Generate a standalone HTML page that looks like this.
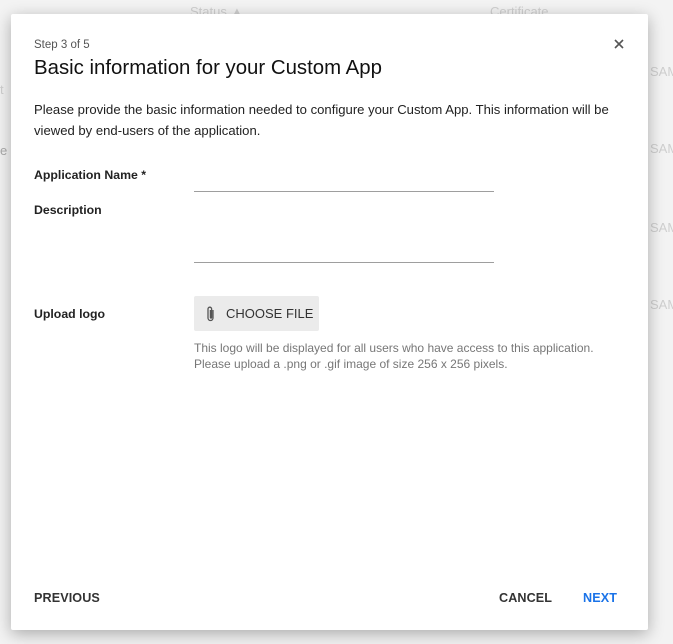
<!DOCTYPE html>
<html><head><style>
body{margin:0;width:673px;height:644px;background:#f3f3f3;font-family:"Liberation Sans",sans-serif;position:relative;overflow:hidden}
.bg{position:absolute;color:#cfcfcf;font-size:13px}
.dlg{position:absolute;left:11px;top:14px;width:637px;height:616px;background:#fff;box-shadow:0 4px 16px rgba(0,0,0,.3);border-radius:2px}
.a{position:absolute;white-space:nowrap}
.lbl{font-size:12.3px;font-weight:bold;color:#222;left:23px}
.line{position:absolute;left:183px;width:300px;height:1px;background:#9e9e9e}
.btn{font-size:12.6px;font-weight:bold;color:#333;letter-spacing:.1px}
</style></head><body>
<div class="bg" style="left:190px;top:4px">Status ▲</div>
<div class="bg" style="left:490px;top:4px">Certificate</div>
<div class="bg" style="left:650px;top:64px">SAM</div>
<div class="bg" style="left:650px;top:141px">SAM</div>
<div class="bg" style="left:650px;top:220px">SAM</div>
<div class="bg" style="left:650px;top:297px">SAM</div>
<div class="bg" style="left:0;top:82px">t</div>
<div class="bg" style="left:0;top:143px;color:#aaa">e</div>
<div class="dlg">
<div class="a" style="left:23px;top:25px;font-size:11.5px;color:#555">Step 3 of 5</div>
<svg class="a" style="left:603px;top:25px" width="10" height="10" viewBox="0 0 10 10"><path d="M1 1L9 9M9 1L1 9" stroke="#555" stroke-width="1.6"/></svg>
<div class="a" style="left:23px;top:43px;font-size:20.4px;color:#111">Basic information for your Custom App</div>
<div class="a" style="left:23px;top:85px;font-size:13.1px;color:#222;line-height:21px">Please provide the basic information needed to configure your Custom App. This information will be<br>viewed by end-users of the application.</div>
<div class="a lbl" style="top:154px">Application Name *</div>
<div class="line" style="top:177px"></div>
<div class="a lbl" style="top:189px">Description</div>
<div class="line" style="top:248px"></div>
<div class="a lbl" style="top:293px">Upload logo</div>
<div class="a" style="left:183px;top:282px;width:125px;height:35px;background:#ebebeb;border-radius:2px"></div>
<svg class="a" style="left:193px;top:291px" width="14" height="18" viewBox="0 0 14 18"><path d="M9 5v8a2.5 2.5 0 0 1-5 0V4a1.8 1.8 0 0 1 3.6 0v8.5a.6.6 0 0 1-1.2 0V5" fill="none" stroke="#555" stroke-width="1.3"/></svg>
<div class="a" style="left:215px;top:292px;font-size:13px;color:#333">CHOOSE FILE</div>
<div class="a" style="left:183px;top:326px;font-size:12px;color:#777;line-height:16px">This logo will be displayed for all users who have access to this application.<br>Please upload a .png or .gif image of size 256 x 256 pixels.</div>
<div class="a btn" style="left:23px;top:577px">PREVIOUS</div>
<div class="a btn" style="left:488px;top:577px">CANCEL</div>
<div class="a btn" style="left:572px;top:577px;color:#1a73e8">NEXT</div>
</div>
</body></html>
